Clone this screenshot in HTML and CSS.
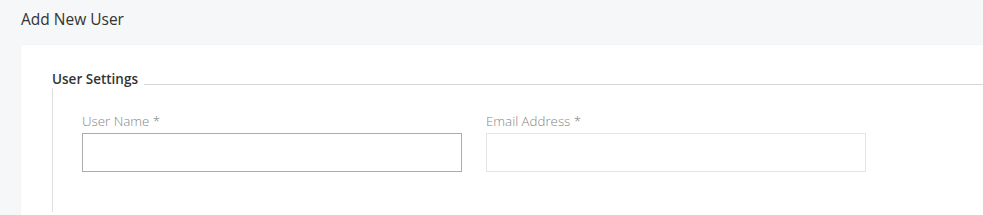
FILE: index.html
```html
<!DOCTYPE html>
<html lang="en">
<head>
    <meta charset="UTF-8">
    <meta name="viewport" content="width=device-width, initial-scale=1.0">
    <title>Add New User</title>
    <link rel="stylesheet" href="styles.css">
</head>
<body>
    <header class="page-header">
        <h1>Add New User</h1>
    </header>
    <main class="card">
        <section class="settings">
            <div class="settings-head">
                <h2>User Settings</h2>
                <div class="settings-rule"></div>
            </div>
            <div class="settings-body">
                <div class="field">
                    <label for="userName">User Name *</label>
                    <input type="text" id="userName" class="input input-active">
                </div>
                <div class="field">
                    <label for="userEmail">Email Address *</label>
                    <input type="email" id="userEmail" class="input">
                </div>
            </div>
        </section>
    </main>
</body>
</html>
```

FILE: styles.css
```css
body {
    font-family: "Open Sans", Arial, sans-serif;
    margin: 0;
    background-color: #f6f7f8;
    color: #333;
    overflow: hidden;
}

.page-header {
    padding: 8px 21px 0;
    height: 37px;
}

h1 {
    margin: 0;
    font-size: 15.5px;
    font-weight: 400;
    line-height: 22px;
    color: #333;
}

.card {
    margin-left: 21px;
    background: #fff;
    border-radius: 3px 0 0 0;
    box-shadow: 0 0 2px rgba(0, 0, 0, 0.05);
    padding: 25px 0 0 31px;
    height: 145px;
}

.settings-head {
    display: flex;
    align-items: flex-end;
}

h2 {
    margin: 0;
    font-size: 13.5px;
    font-weight: 600;
    line-height: 18px;
    color: #333;
}

.settings-rule {
    flex: 1;
    border-bottom: 1px solid #d6d6d6;
    margin: 0 0 3px 6px;
}

.settings-body {
    display: flex;
    gap: 24px;
    padding: 24px 0 40px 29px;
    border-left: 1px solid #dedede;
}

.field label {
    display: block;
    font-size: 13.3px;
    font-weight: 300;
    line-height: 18px;
    color: #858585;
    margin-bottom: 3px;
}

.input {
    display: block;
    box-sizing: border-box;
    width: 380px;
    height: 39px;
    margin: 0;
    padding: 6px 10px;
    border: 1px solid #e4e4e4;
    border-radius: 0;
    background: #fff;
    font-family: inherit;
    font-size: 13px;
    outline: none;
}

.input-active {
    border-color: #ababab;
}
```
